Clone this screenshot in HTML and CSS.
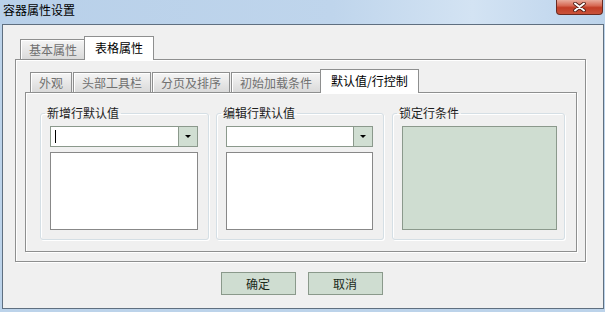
FILE: index.html
```html
<!DOCTYPE html>
<html lang="zh-CN">
<head>
  <meta charset="UTF-8" />
  <title>容器属性设置</title>
  <link rel="stylesheet" href="styles.css">
</head>
<body>
  <div class="titlebar">
    <span class="title">容器属性设置</span>
    <button class="close-btn">
      <svg width="13" height="10" viewBox="0 0 13 10">
        <path d="M2 1.5 L11 8.5 M11 1.5 L2 8.5" stroke="#4a1c14" stroke-width="3.6" stroke-linecap="round"/>
        <path d="M2 1.5 L11 8.5 M11 1.5 L2 8.5" stroke="#fff" stroke-width="2" stroke-linecap="round"/>
      </svg>
    </button>
  </div>

  <div class="client">
    <div class="outer-tabs">
      <div class="tab-strip">
        <div class="tab">基本属性</div>
        <div class="tab active">表格属性</div>
      </div>
      <div class="tab-panel outer-panel">
        <div class="inner-tabs">
          <div class="tab-strip">
            <div class="tab">外观</div>
            <div class="tab">头部工具栏</div>
            <div class="tab">分页及排序</div>
            <div class="tab">初始加载条件</div>
            <div class="tab active">默认值/行控制</div>
          </div>
          <div class="tab-panel inner-panel">
            <!-- 新增行 -->
            <fieldset class="group g1">
              <legend>新增行默认值</legend>
              <div class="group-body">
                <div class="combo">
                  <span class="combo-text"><span class="caret"></span></span>
                  <span class="combo-btn"><span class="arrow"></span></span>
                </div>
                <div class="textbox"></div>
              </div>
            </fieldset>
            <!-- 编辑行 -->
            <fieldset class="group g2">
              <legend>编辑行默认值</legend>
              <div class="group-body">
                <div class="combo">
                  <span class="combo-text"></span>
                  <span class="combo-btn"><span class="arrow"></span></span>
                </div>
                <div class="textbox"></div>
              </div>
            </fieldset>
            <!-- 锁定行 -->
            <fieldset class="group g3">
              <legend>锁定行条件</legend>
              <div class="group-body">
                <div class="lock-box"></div>
              </div>
            </fieldset>
          </div>
        </div>
      </div>
    </div>

    <div class="buttons">
      <button class="btn">确定</button>
      <button class="btn">取消</button>
    </div>
  </div>
</body>
</html>
```

FILE: styles.css
```css
* {
  box-sizing: border-box;
}

body {
  margin: 0;
  width: 605px;
  height: 312px;
  overflow: hidden;
  background: #bcd3ea;
  font-family: "Noto Sans CJK SC", "Liberation Sans", sans-serif;
  font-size: 12px;
  color: #000;
}

.titlebar {
  height: 24px;
  display: flex;
  justify-content: space-between;
  align-items: flex-start;
  background: linear-gradient(to right, #b8d0e9 0%, #bfd5ec 55%, #d3e3f3 78%, #c6daef 90%, #bcd3ea 100%);
}

.title {
  padding: 2px 0 0 3px;
  line-height: 15px;
}

.close-btn {
  width: 47px;
  height: 15px;
  margin-right: 2px;
  padding: 0;
  border: 1px solid #6a2a20;
  border-top: none;
  border-radius: 0 0 4px 4px;
  background: linear-gradient(#e9ab9c, #d76a55 40%, #c23d26 55%, #c9533a);
  display: flex;
  align-items: center;
  justify-content: center;
}

.client {
  margin-left: 2px;
  width: 602px;
  height: 285px;
  border: 1px solid #5f6f80;
  background: #f0f0f0;
}

.outer-tabs {
  margin: 11px 0 0 12px;
  width: 571px;
}

.tab-strip {
  display: flex;
  align-items: flex-end;
  padding-left: 5px;
}

.tab {
  height: 20px;
  line-height: 19px;
  padding: 0 8px;
  border: 1px solid #8e8f8f;
  border-bottom: none;
  background: linear-gradient(#f5f5f5, #dadada);
  box-shadow: inset 1px 1px #fff;
  color: #707070;
  white-space: nowrap;
}

.inner-tabs .tab {
  margin-right: 1px;
}

.tab.active,
.inner-tabs .tab.active {
  position: relative;
  z-index: 1;
  height: 24px;
  margin: 0 -2px -1px;
  padding: 0 10px;
  line-height: 21px;
  background: #fff;
  box-shadow: none;
  color: #000;
}

.tab-panel {
  border: 1px solid #8e8f8f;
  box-shadow: inset 1px 1px #fff, 1px 1px #fff;
}

.outer-panel {
  height: 203px;
  padding: 9px 0 0 9px;
}

.inner-tabs {
  width: 552px;
}

.inner-panel {
  height: 160px;
  display: flex;
  align-items: flex-start;
  padding: 13px 0 0 14px;
}

.group {
  margin: 0;
  padding: 0;
  min-width: 0;
  height: 134px;
  border: 1px solid #d5dfe5;
  border-radius: 3px;
  box-shadow: inset 1px 1px #fff, 1px 1px #fff;
}

.group legend {
  margin-left: 4px;
  padding: 0 2px;
  line-height: 14px;
  color: #1e1e1e;
}

.g1 {
  width: 169px;
}

.g2 {
  width: 168px;
  margin-left: 7px;
}

.g3 {
  width: 173px;
  margin-left: 8px;
}

.group-body {
  padding: 6px 10px 0 9px;
}

.combo {
  display: flex;
  height: 21px;
  border: 1px solid #8b998c;
  background: #fff;
}

.combo-text {
  flex: 1;
  display: flex;
  align-items: center;
  padding-left: 4px;
}

.caret {
  width: 1px;
  height: 13px;
  background: #000;
}

.combo-btn {
  width: 19px;
  display: flex;
  align-items: center;
  justify-content: center;
  border-left: 1px solid #8b998c;
  background: #d0ded2;
}

.arrow {
  border-left: 3px solid transparent;
  border-right: 3px solid transparent;
  border-top: 3px solid #000;
}

.textbox {
  margin-top: 5px;
  height: 78px;
  border: 1px solid #888;
  background: #fff;
}

.lock-box {
  width: 155px;
  height: 104px;
  border: 1px solid #8b998c;
  background: #cfddd1;
}

.buttons {
  display: flex;
  justify-content: center;
  gap: 12px;
  margin-top: 10px;
  padding-right: 3px;
}

.btn {
  width: 75px;
  height: 23px;
  padding: 0;
  border: 1px solid #8a998b;
  background: #cfddd1;
  font: inherit;
  color: #1b2a1b;
}
```
